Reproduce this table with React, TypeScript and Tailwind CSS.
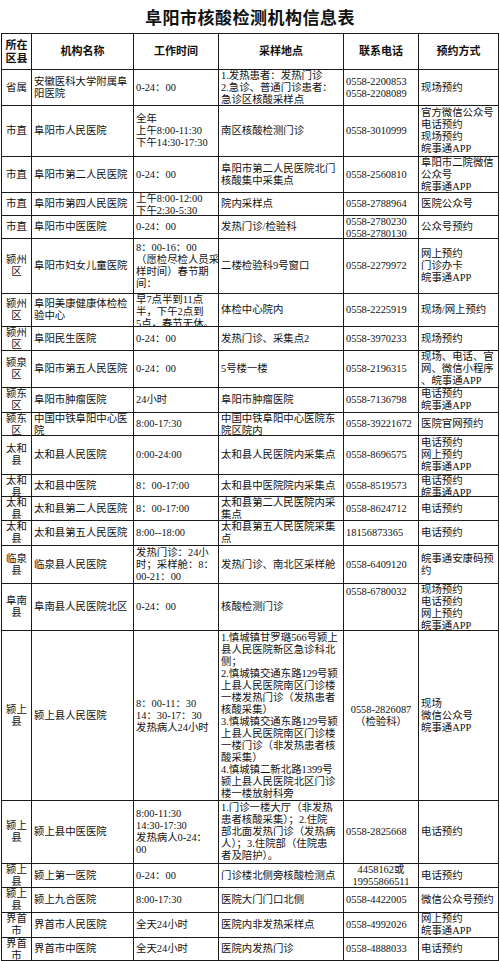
import type { ReactNode } from 'react';

type Row = {
  h: string;
  area: string[];
  name: string[];
  time: string[];
  place: string[];
  phone: string[];
  book: string[];
  phoneAlign?: 'top' | 'center';
};

const ROWS: Row[] = [
  {
    h: 'h-[36px]',
    area: ['省属'],
    name: ['安徽医科大学附属阜', '阳医院'],
    time: ['0-24：00'],
    place: ['1.发热患者：发热门诊', '2.急诊、普通门诊患者：', '急诊区核酸采样点'],
    phone: ['0558-2200853', '0558-2208089'],
    book: ['现场预约'],
  },
  {
    h: 'h-[51px]',
    area: ['市直'],
    name: ['阜阳市人民医院'],
    time: ['全年', '上午8:00-11:30', '下午14:30-17:30'],
    place: ['南区核酸检测门诊'],
    phone: ['0558-3010999'],
    book: ['官方微信公众号', '电话预约', '现场预约', '皖事通APP'],
  },
  {
    h: 'h-[36px]',
    area: ['市直'],
    name: ['阜阳市第二人民医院'],
    time: ['0-24：00'],
    place: ['阜阳市第二人民医院北门', '核酸集中采集点'],
    phone: ['0558-2560810'],
    book: ['阜阳市二院微信', '公众号', '皖事通APP'],
  },
  {
    h: 'h-[23px]',
    area: ['市直'],
    name: ['阜阳市第四人民医院'],
    time: ['上午8:00-12:00', '下午2:30-5:30'],
    place: ['院内采样点'],
    phone: ['0558-2788964'],
    book: ['医院公众号'],
  },
  {
    h: 'h-[23px]',
    area: ['市直'],
    name: ['阜阳市中医医院'],
    time: ['0-24：00'],
    place: ['发热门诊/检验科'],
    phone: ['0558-2780230', '0558-2780130'],
    book: ['公众号预约'],
  },
  {
    h: 'h-[55px]',
    area: ['颍州', '区'],
    name: ['阜阳市妇女儿童医院'],
    time: ['8：00-16：00', '（愿检尽检人员采', '样时间）春节期', '间：'],
    place: ['二楼检验科9号窗口'],
    phone: ['0558-2279972'],
    book: ['网上预约', '门诊办卡', '皖事通APP'],
  },
  {
    h: 'h-[33px]',
    area: ['颍州', '区'],
    name: ['阜阳美康健康体检检', '验中心'],
    time: ['早7点半到11点', '半，下午2点到', '5点，春节无休。'],
    place: ['体检中心院内'],
    phone: ['0558-2225919'],
    book: ['现场/网上预约'],
  },
  {
    h: 'h-[24px]',
    area: ['颍州', '区'],
    name: ['阜阳民生医院'],
    time: ['0-24：00'],
    place: ['发热门诊、采集点2'],
    phone: ['0558-3970233'],
    book: ['现场预约'],
  },
  {
    h: 'h-[37px]',
    area: ['颍泉', '区'],
    name: ['阜阳市第五人民医院'],
    time: ['0-24：00'],
    place: ['5号楼一楼'],
    phone: ['0558-2196315'],
    book: ['现场、电话、官', '网、微信小程序', '、皖事通APP'],
  },
  {
    h: 'h-[25px]',
    area: ['颍东', '区'],
    name: ['阜阳市肿瘤医院'],
    time: ['24小时'],
    place: ['阜阳市肿瘤医院'],
    phone: ['0558-7136798'],
    book: ['电话预约', '皖事通APP'],
  },
  {
    h: 'h-[23px]',
    area: ['颍东', '区'],
    name: ['中国中铁阜阳中心医', '院'],
    time: ['8:00-17:30'],
    place: ['中国中铁阜阳中心医院东', '院区院内'],
    phone: ['0558-39221672'],
    book: ['医院官网预约'],
  },
  {
    h: 'h-[39px]',
    area: ['太和', '县'],
    name: ['太和县人民医院'],
    time: ['0:00-24:00'],
    place: ['太和县人民医院内采集点'],
    phone: ['0558-8696575'],
    book: ['电话预约', '网上预约', '皖事通APP'],
  },
  {
    h: 'h-[22px]',
    area: ['太和', '县'],
    name: ['太和县中医院'],
    time: ['8：00-17:00'],
    place: ['太和县中医院院内采集点'],
    phone: ['0558-8519573'],
    book: ['电话预约', '皖事通APP'],
  },
  {
    h: 'h-[24px]',
    area: ['太和', '县'],
    name: ['太和县第二人民医院'],
    time: ['8：00-17:00'],
    place: ['太和县第二人民医院内采', '集点'],
    phone: ['0558-8624712'],
    book: ['电话预约'],
  },
  {
    h: 'h-[25px]',
    area: ['太和', '县'],
    name: ['太和县第五人民医院'],
    time: ['8:00--18:00'],
    place: ['太和县第五人民医院采集', '点'],
    phone: ['18156873365'],
    book: ['电话预约'],
  },
  {
    h: 'h-[38px]',
    area: ['临泉', '县'],
    name: ['临泉县人民医院'],
    time: ['发热门诊：24小', '时；采样舱：8：', '00-21：00'],
    place: ['发热门诊、南北区采样舱'],
    phone: ['0558-6409120'],
    book: ['皖事通安康码预', '约'],
  },
  {
    h: 'h-[47px]',
    area: ['阜南', '县'],
    name: ['阜南县人民医院北区'],
    time: ['0-24：00'],
    place: ['核酸检测门诊'],
    phone: ['0558-6780032'],
    phoneAlign: 'top',
    book: ['现场预约', '电话预约', '网上预约', '皖事通APP'],
  },
  {
    h: 'h-[170px]',
    area: ['颍上', '县'],
    name: ['颍上县人民医院'],
    time: ['8：00-11：30', '14：30-17：30', '发热病人24小时'],
    place: [
      '1.慎城镇甘罗璐566号颍上',
      '县人民医院新区急诊科北',
      '侧；',
      '2.慎城镇交通东路129号颍',
      '上县人民医院南区门诊楼',
      '一楼发热门诊（发热患者',
      '核酸采集）',
      '3.慎城镇交通东路129号颍',
      '上县人民医院南区门诊楼',
      '一楼门诊（非发热患者核',
      '酸采集）',
      '4.慎城镇二新北路1399号',
      '颍上县人民医院北区门诊',
      '楼一楼放射科旁',
    ],
    phone: ['0558-2826087', '（检验科）'],
    phoneAlign: 'center',
    book: ['现场', '微信公众号', '皖事通APP'],
  },
  {
    h: 'h-[63px]',
    area: ['颍上', '县'],
    name: ['颍上县中医医院'],
    time: ['8:00-11:30', '14:30-17:30', '发热病人0-24：', '00'],
    place: ['1.门诊一楼大厅（非发热', '患者核酸采集）；2.住院', '部北面发热门诊（发热病', '人）；3.住院部（住院患', '者及陪护）。'],
    phone: ['0558-2825668'],
    book: ['电话预约'],
  },
  {
    h: 'h-[24px]',
    area: ['颍上', '县'],
    name: ['颍上第一医院'],
    time: ['0-24：00'],
    place: ['门诊楼北侧旁核酸检测点'],
    phone: ['4458162或', '19955866511'],
    phoneAlign: 'center',
    book: ['电话预约'],
  },
  {
    h: 'h-[25px]',
    area: ['颍上', '县'],
    name: ['颍上九合医院'],
    time: ['8:00-17:30'],
    place: ['医院大门门口北侧'],
    phone: ['0558-4422005'],
    book: ['微信公众号预约'],
  },
  {
    h: 'h-[25px]',
    area: ['界首', '市'],
    name: ['界首市人民医院'],
    time: ['全天24小时'],
    place: ['医院内非发热采样点'],
    phone: ['0558-4992026'],
    book: ['网上预约', '皖事通APP'],
  },
  {
    h: 'h-[23px]',
    area: ['界首', '市'],
    name: ['界首市中医院'],
    time: ['全天24小时'],
    place: ['医院内发热门诊'],
    phone: ['0558-4888033'],
    book: ['电话预约'],
  },
];

// each line is pinned to 12px so mixed-font metrics don't stretch rows
function Lines({ lines }: { lines: string[] }) {
  return (
    <>
      {lines.map((l, i) => (
        <div key={i} className="h-[12px] shrink-0 leading-[12px] whitespace-nowrap">
          {l}
        </div>
      ))}
    </>
  );
}

// cells keep the row's fixed height and clip like a spreadsheet does
function Cell({ children, className = '' }: { children: ReactNode; className?: string }) {
  return (
    <div className={`flex flex-col overflow-hidden border-r border-b border-[#1a1a1a] px-[2px] ${className}`}>
      {children}
    </div>
  );
}

const GRID = 'grid grid-cols-[30px_102px_85px_125px_75px_80px]';

export default function App() {
  return (
    <div
      className="w-[500px] h-[961px] bg-white text-[#111] overflow-hidden"
      style={{ fontFamily: "'Liberation Serif', 'Noto Sans CJK SC', serif" }}
    >
      {/* Title */}
      <div className="h-[33px] flex items-center justify-center pt-[1px]">
        <h1
          className="text-[17px] font-bold tracking-[0.5px] leading-[20px]"
          style={{ fontFamily: "'Noto Sans CJK SC', sans-serif" }}
        >
          阜阳市核酸检测机构信息表
        </h1>
      </div>

      <div className="ml-[1px] w-[498px] border-l border-t border-[#1a1a1a] text-[10.4px]">
        {/* Header */}
        <div className={`${GRID} h-[36px] font-bold text-[11px]`}>
          <Cell className="justify-center items-center">
            <div className="h-[13px] leading-[13px]">所在</div>
            <div className="h-[13px] leading-[13px]">区县</div>
          </Cell>
          <Cell className="justify-center items-center">机构名称</Cell>
          <Cell className="justify-center items-center">工作时间</Cell>
          <Cell className="justify-center items-center">采样地点</Cell>
          <Cell className="justify-center items-center">联系电话</Cell>
          <Cell className="justify-center items-center">预约方式</Cell>
        </div>

        {ROWS.map((r, i) => (
          <div key={i} className={`${GRID} ${r.h}`}>
            <Cell className="[justify-content:safe_center] items-center">
              <Lines lines={r.area} />
            </Cell>
            <Cell className="[justify-content:safe_center]">
              <Lines lines={r.name} />
            </Cell>
            <Cell className="[justify-content:safe_center]">
              <Lines lines={r.time} />
            </Cell>
            <Cell className="[justify-content:safe_center]">
              <Lines lines={r.place} />
            </Cell>
            <Cell
              className={
                r.phoneAlign === 'top'
                  ? 'justify-start pt-[2px]'
                  : r.phoneAlign === 'center'
                    ? '[justify-content:safe_center] items-center'
                    : '[justify-content:safe_center]'
              }
            >
              <Lines lines={r.phone} />
            </Cell>
            <Cell className="[justify-content:safe_center]">
              <Lines lines={r.book} />
            </Cell>
          </div>
        ))}
      </div>
    </div>
  );
}
